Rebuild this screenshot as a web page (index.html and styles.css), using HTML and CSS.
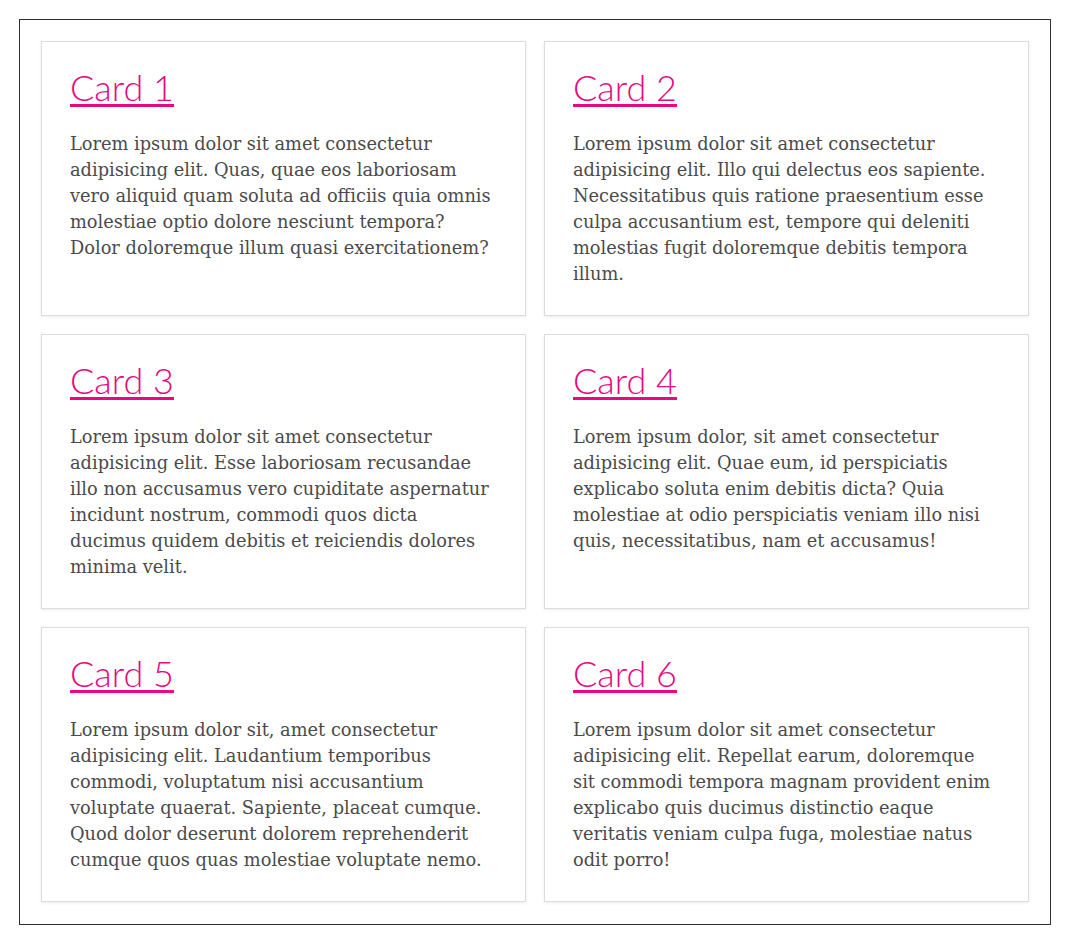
FILE: index.html
```html
<!DOCTYPE html>
<html>
<head>
<meta charset="utf-8">
<link rel="stylesheet" href="styles.css">
</head>
<body>
<div class="container">
  <div class="card">
    <h2 class="card-title"><a href="#">Card 1</a></h2>
    <p class="card-text">Lorem ipsum dolor sit amet consectetur adipisicing elit. Quas, quae eos laboriosam vero aliquid quam soluta ad officiis quia omnis molestiae optio dolore nesciunt tempora? Dolor doloremque illum quasi exercitationem?</p>
  </div>
  <div class="card">
    <h2 class="card-title"><a href="#">Card 2</a></h2>
    <p class="card-text">Lorem ipsum dolor sit amet consectetur adipisicing elit. Illo qui delectus eos sapiente. Necessitatibus quis ratione praesentium esse culpa accusantium est, tempore qui deleniti molestias fugit doloremque debitis tempora illum.</p>
  </div>
  <div class="card">
    <h2 class="card-title"><a href="#">Card 3</a></h2>
    <p class="card-text">Lorem ipsum dolor sit amet consectetur adipisicing elit. Esse laboriosam recusandae illo non accusamus vero cupiditate aspernatur incidunt nostrum, commodi quos dicta ducimus quidem debitis et reiciendis dolores minima velit.</p>
  </div>
  <div class="card">
    <h2 class="card-title"><a href="#">Card 4</a></h2>
    <p class="card-text">Lorem ipsum dolor, sit amet consectetur adipisicing elit. Quae eum, id perspiciatis explicabo soluta enim debitis dicta? Quia molestiae at odio perspiciatis veniam illo nisi quis, necessitatibus, nam et accusamus!</p>
  </div>
  <div class="card">
    <h2 class="card-title"><a href="#">Card 5</a></h2>
    <p class="card-text">Lorem ipsum dolor sit, amet consectetur adipisicing elit. Laudantium temporibus commodi, voluptatum nisi accusantium voluptate quaerat. Sapiente, placeat cumque. Quod dolor deserunt dolorem reprehenderit cumque quos quas molestiae voluptate nemo.</p>
  </div>
  <div class="card">
    <h2 class="card-title"><a href="#">Card 6</a></h2>
    <p class="card-text">Lorem ipsum dolor sit amet consectetur adipisicing elit. Repellat earum, doloremque sit commodi tempora magnam provident enim explicabo quis ducimus distinctio eaque veritatis veniam culpa fuga, molestiae natus odit porro!</p>
  </div>
</div>
</body>
</html>
```
FILE: styles.css
```css
html, body {
  margin: 0;
  padding: 0;
  background: #fff;
}
body {
  padding: 19px 19px 18px 19px;
}
.container {
  border: 1px solid #333;
  padding: 21px 21px 22px 21px;
  display: grid;
  grid-template-columns: 1fr 1fr;
  gap: 18px;
}
.card {
  border: 1px solid #dcdcdc;
  box-shadow: 0 1px 3px rgba(0,0,0,0.08);
  padding: 28px;
  background: #fff;
}
.card-title {
  margin: 0 0 27px 0;
  font-family: Lato, "Open Sans", sans-serif;
  font-weight: 300;
  font-size: 36px;
  line-height: 34px;
  letter-spacing: 0;
}
.card-title a {
  color: #e6097f;
  text-decoration: underline;
  text-decoration-thickness: 3px;
  text-underline-offset: 3px;
}
.card-text {
  margin: 0;
  font-family: "DejaVu Serif", serif;
  font-size: 17.8px;
  line-height: 26px;
  color: #4a4a4a;
}
```
